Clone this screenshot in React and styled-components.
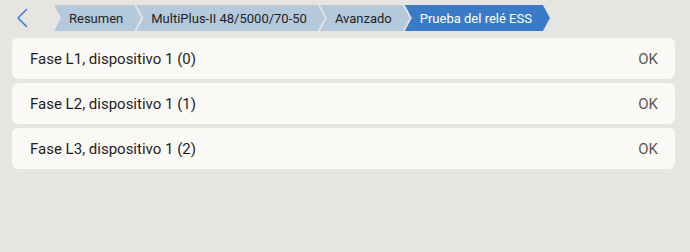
import React from "react";
import styled, { createGlobalStyle } from "styled-components";

const GlobalStyle = createGlobalStyle`
  html, body {
    margin: 0;
    padding: 0;
    background: #e7e5e2;
    font-family: Roboto, "Noto Sans", "Liberation Sans", sans-serif;
  }
`;

const crumbs = [
  { label: "Resumen" },
  { label: "MultiPlus-II 48/5000/70-50" },
  { label: "Avanzado" },
  { label: "Prueba del relé ESS", active: true },
];

const rows = [
  { label: "Fase L1, dispositivo 1 (0)", value: "OK" },
  { label: "Fase L2, dispositivo 1 (1)", value: "OK" },
  { label: "Fase L3, dispositivo 1 (2)", value: "OK" },
];

const App = () => {
  return (
    <StyledPage>
      <GlobalStyle />
      <StyledHeader>
        <BackButton aria-label="Atrás">
          <svg width="12" height="20" viewBox="0 0 12 20">
            <path
              d="M10.5 1.5 L2 10 L10.5 18.5"
              fill="none"
              stroke="#3b7dcb"
              strokeWidth="1.5"
              strokeLinecap="round"
              strokeLinejoin="round"
            />
          </svg>
        </BackButton>
        <Crumbs>
          {crumbs.map((c) => (
            <Crumb key={c.label} active={c.active}>
              {c.label}
            </Crumb>
          ))}
        </Crumbs>
      </StyledHeader>
      <List>
        {rows.map((r) => (
          <Row key={r.label}>
            <span>{r.label}</span>
            <Value>{r.value}</Value>
          </Row>
        ))}
      </List>
    </StyledPage>
  );
};

const StyledPage = styled.div`
  width: 690px;
  height: 252px;
  background: #e7e5e2;
`;

const StyledHeader = styled.div`
  display: flex;
  align-items: center;
  height: 36px;
  padding-left: 16px;
`;

const BackButton = styled.div`
  display: flex;
  align-items: center;
  width: 38px;
  height: 26px;
`;

const Crumbs = styled.div`
  display: flex;
  align-items: center;
  height: 26px;
  margin-top: 0;
`;

const Crumb = styled.div`
  display: flex;
  align-items: center;
  height: 26px;
  padding: 0 18px 0 15px;
  margin-left: -5px;
  font-size: 13px;
  color: ${(p) => (p.active ? "#ffffff" : "#1f1f1f")};
  background: ${(p) => (p.active ? "#3a7bc9" : "#b5c9dd")};
  clip-path: polygon(
    0 0,
    calc(100% - 7px) 0,
    100% 50%,
    calc(100% - 7px) 100%,
    0 100%,
    7px 50%
  );
  white-space: nowrap;

  &:first-child {
    margin-left: 0;
  }
`;

const List = styled.div`
  display: flex;
  flex-direction: column;
  gap: 4px;
  padding: 2px 15px 0 12px;
`;

const Row = styled.div`
  display: flex;
  align-items: center;
  justify-content: space-between;
  height: 41px;
  padding: 0 17px 0 18px;
  background: #faf9f6;
  border-radius: 6px;
  font-size: 15px;
  color: #1f1f1f;
`;

const Value = styled.span`
  color: #5a5a5a;
`;

export default App;
